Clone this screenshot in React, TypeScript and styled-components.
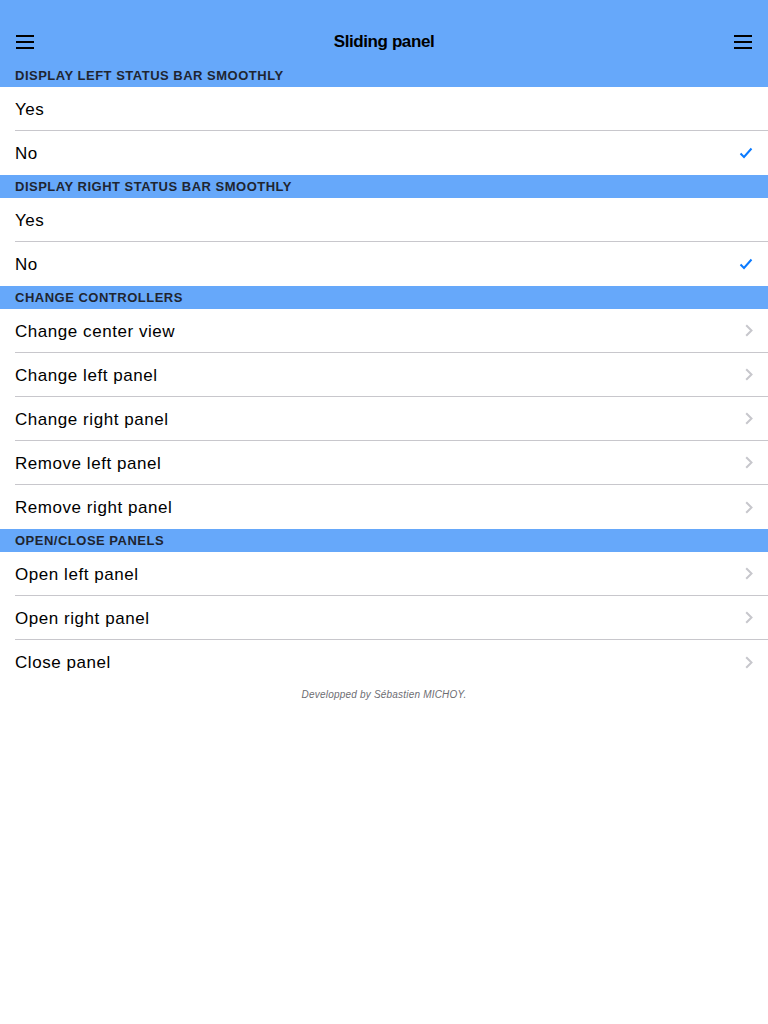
import styled, { createGlobalStyle } from 'styled-components';

const GlobalStyle = createGlobalStyle`
  html, body {
    margin: 0;
    padding: 0;
    background: #ffffff;
    font-family: "Liberation Sans", Arial, sans-serif;
  }
`;

type Row = { label: string; accessory: 'none' | 'check' | 'chevron' };
type Section = { title: string; rows: Row[] };

const sections: Section[] = [
  {
    title: 'DISPLAY LEFT STATUS BAR SMOOTHLY',
    rows: [
      { label: 'Yes', accessory: 'none' },
      { label: 'No', accessory: 'check' },
    ],
  },
  {
    title: 'DISPLAY RIGHT STATUS BAR SMOOTHLY',
    rows: [
      { label: 'Yes', accessory: 'none' },
      { label: 'No', accessory: 'check' },
    ],
  },
  {
    title: 'CHANGE CONTROLLERS',
    rows: [
      { label: 'Change center view', accessory: 'chevron' },
      { label: 'Change left panel', accessory: 'chevron' },
      { label: 'Change right panel', accessory: 'chevron' },
      { label: 'Remove left panel', accessory: 'chevron' },
      { label: 'Remove right panel', accessory: 'chevron' },
    ],
  },
  {
    title: 'OPEN/CLOSE PANELS',
    rows: [
      { label: 'Open left panel', accessory: 'chevron' },
      { label: 'Open right panel', accessory: 'chevron' },
      { label: 'Close panel', accessory: 'chevron' },
    ],
  },
];

const Hamburger = () => (
  <svg width="18" height="14" viewBox="0 0 18 14">
    <rect x="0" y="0" width="18" height="2" fill="#000" />
    <rect x="0" y="6" width="18" height="2" fill="#000" />
    <rect x="0" y="12" width="18" height="2" fill="#000" />
  </svg>
);

const Check = () => (
  <svg width="14" height="12" viewBox="0 0 14 12">
    <path d="M1.5 6.5 L5 10 L12.5 1.5" fill="none" stroke="#0a7aff" strokeWidth="2" />
  </svg>
);

const Chevron = () => (
  <svg width="8" height="13" viewBox="0 0 8 13">
    <path d="M1.2 1.2 L6.5 6.5 L1.2 11.8" fill="none" stroke="#c7c7cc" strokeWidth="2" />
  </svg>
);

export default function App() {
  return (
    <Page>
      <GlobalStyle />
      <NavBar>
        <NavButton>
          <Hamburger />
        </NavButton>
        <NavTitle>Sliding panel</NavTitle>
        <NavButton>
          <Hamburger />
        </NavButton>
      </NavBar>
      {sections.map((section) => (
        <div key={section.title}>
          <SectionHeader>{section.title}</SectionHeader>
          {section.rows.map((row, i) => (
            <Cell key={row.label} last={i === section.rows.length - 1}>
              <CellLabel>{row.label}</CellLabel>
              <Accessory>
                {row.accessory === 'check' && <Check />}
                {row.accessory === 'chevron' && <Chevron />}
              </Accessory>
            </Cell>
          ))}
        </div>
      ))}
      <Footer>Developped by Sébastien MICHOY.</Footer>
    </Page>
  );
}

// Styled Components

const Page = styled.div`
  width: 768px;
  min-height: 1024px;
  background: #ffffff;
`;

const NavBar = styled.div`
  height: 44px;
  padding-top: 20px;
  background: #66a8fa;
  display: flex;
  align-items: center;
  justify-content: space-between;
  padding-left: 16px;
  padding-right: 16px;
`;

const NavButton = styled.div`
  width: 18px;
  height: 14px;
  display: flex;
`;

const NavTitle = styled.div`
  font-size: 17px;
  font-weight: bold;
  letter-spacing: -0.4px;
  color: #000;
`;

const SectionHeader = styled.div`
  height: 23px;
  background: #66a8fa;
  color: #1f2530;
  font-size: 13px;
  font-weight: bold;
  letter-spacing: 0.5px;
  padding-left: 15px;
  display: flex;
  align-items: center;
`;

const Cell = styled.div<{ last: boolean }>`
  height: 44px;
  margin-left: 15px;
  padding-right: 15px;
  display: flex;
  align-items: center;
  justify-content: space-between;
  box-sizing: border-box;
  border-bottom: ${(p) => (p.last ? 'none' : '1px solid #c8c7cc')};
`;

const CellLabel = styled.div`
  font-size: 17px;
  letter-spacing: 0.55px;
  color: #000;
  padding-top: 2px;
`;

const Accessory = styled.div`
  display: flex;
  align-items: center;
`;

const Footer = styled.div`
  text-align: center;
  font-size: 10px;
  font-style: italic;
  letter-spacing: 0.2px;
  color: #6d6d72;
  padding-top: 5px;
`;
